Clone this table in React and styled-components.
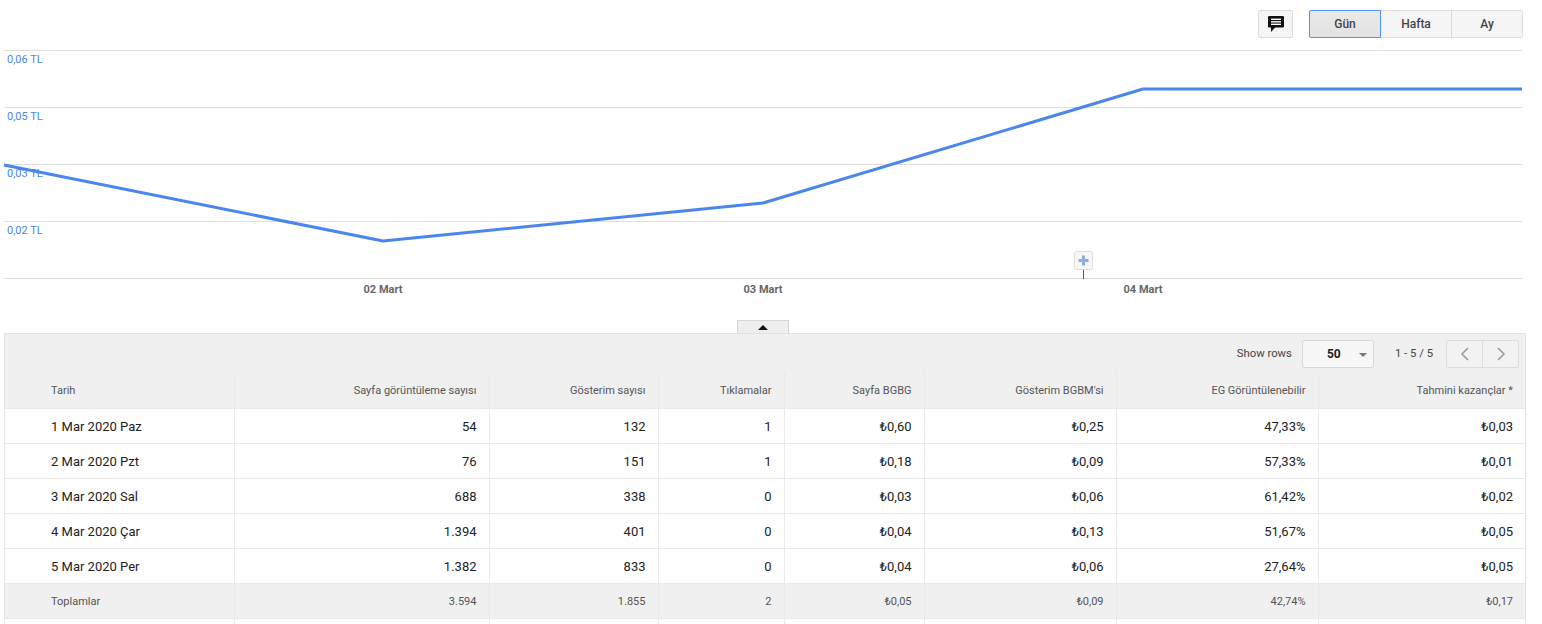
import React from "react";
import styled, { createGlobalStyle, css } from "styled-components";

const Global = createGlobalStyle`
  html, body { margin: 0; padding: 0; background: #fff; }
  body { font-family: Roboto, "Liberation Sans", Arial, sans-serif; color: #222; }
  * { box-sizing: border-box; }
`;

const Page = styled.div`
  width: 1542px;
  height: 624px;
  overflow: hidden;
`;

const TopBar = styled.div`
  height: 50px;
  display: flex;
  justify-content: flex-end;
  align-items: flex-start;
  padding: 10px 19px 0 0;
  gap: 16px;
`;

const IconButton = styled.button`
  width: 35px;
  height: 28px;
  border: 1px solid #dcdcdc;
  border-radius: 2px;
  background: #f5f5f5;
  display: flex;
  align-items: center;
  justify-content: center;
  padding: 0;
`;

const Segmented = styled.div`
  display: flex;
  height: 28px;
`;

const SegButton = styled.button`
  width: 72px;
  height: 28px;
  font-family: Roboto, "Liberation Sans", Arial, sans-serif;
  font-size: 12px;
  font-weight: 500;
  color: #444;
  border: 1px solid #dcdcdc;
  margin-left: -1px;
  background: #f5f5f5;
  padding: 0;
  &:first-child { border-radius: 2px 0 0 2px; margin-left: 0; }
  &:last-child { border-radius: 0 2px 2px 0; }
  ${(p) =>
    p.$active &&
    css`
      background: linear-gradient(#eaeaea, #e2e2e2);
      border-color: #4d90fe;
      position: relative;
      z-index: 1;
    `}
`;

const ChartWrap = styled.div`
  height: 250px;
`;

const Bottom = styled.div`
  margin-top: 20px;
  padding-left: 4px;
  width: 1526px;
`;

const TabRow = styled.div`
  display: flex;
  justify-content: center;
  height: 13px;
  padding-right: 4px;
`;

const CollapseTab = styled.div`
  width: 52px;
  height: 13px;
  background: #eeeeee;
  border: 1px solid #d6d6d6;
  border-bottom: none;
  display: flex;
  justify-content: center;
  padding-top: 4px;
  &::after {
    content: "";
    width: 0;
    height: 0;
    border-left: 5px solid transparent;
    border-right: 5px solid transparent;
    border-bottom: 5px solid #111;
  }
`;

const Panel = styled.div`
  border: 1px solid #e2e2e2;
  border-bottom: none;
  background: #f0f0f0;
  width: 1522px;
`;

const TableBar = styled.div`
  height: 39px;
  display: flex;
  align-items: center;
  justify-content: flex-end;
  padding-right: 6px;
  font-size: 11.3px;
  color: #444;
`;

const BarLabel = styled.span`
  margin-right: 10px;
`;

const Select = styled.div`
  width: 72px;
  height: 28px;
  border: 1px solid #d8d8d8;
  border-radius: 2px;
  background: #f7f7f7;
  display: flex;
  align-items: center;
  padding-left: 24px;
  font-size: 12px;
  font-weight: 700;
  color: #222;
  position: relative;
  margin-right: 21px;
  &::after {
    content: "";
    position: absolute;
    right: 6px;
    top: 12px;
    border-left: 4px solid transparent;
    border-right: 4px solid transparent;
    border-top: 4px solid #777;
  }
`;

const Range = styled.span`
  margin-right: 13px;
`;

const Pager = styled.div`
  display: flex;
`;

const PageBtn = styled.button`
  width: 37px;
  height: 28px;
  border: 1px solid #dcdcdc;
  background: #f2f2f2;
  margin-left: -1px;
  padding: 0;
  display: flex;
  align-items: center;
  justify-content: center;
  &:first-child { margin-left: 0; border-radius: 2px 0 0 2px; }
  &:last-child { border-radius: 0 2px 2px 0; }
`;

const Table = styled.table`
  width: 1520px;
  border-collapse: collapse;
  table-layout: fixed;
`;

const cell = css`
  height: 35px;
  padding: 1px 12px 0;
  border-right: 1px solid #e9e9e9;
  border-bottom: 1px solid #e9e9e9;
  text-align: ${(p) => (p.$left ? "left" : "right")};
  padding-left: ${(p) => (p.$left ? "46px" : "12px")};
  white-space: nowrap;
  &:last-child { border-right: none; }
`;

const Th = styled.th`
  ${cell}
  font-weight: 400;
  font-size: 11px;
  color: #555;
  background: #f0f0f0;
`;

const Td = styled.td`
  ${cell}
  font-size: 13px;
  color: #222;
  background: #fff;
`;

const TotalTd = styled.td`
  ${cell}
  font-size: 11px;
  color: #555;
  background: #f0f0f0;
`;

const EmptyTd = styled.td`
  ${cell}
  background: #fff;
  border-bottom: none;
`;

const cols = [229, 255, 169, 126, 140, 192, 202, 207];
const headers = [
  "Tarih",
  "Sayfa görüntüleme sayısı",
  "Gösterim sayısı",
  "Tıklamalar",
  "Sayfa BGBG",
  "Gösterim BGBM'si",
  "EG Görüntülenebilir",
  "Tahmini kazançlar *",
];
const rows = [
  ["1 Mar 2020 Paz", "54", "132", "1", "₺0,60", "₺0,25", "47,33%", "₺0,03"],
  ["2 Mar 2020 Pzt", "76", "151", "1", "₺0,18", "₺0,09", "57,33%", "₺0,01"],
  ["3 Mar 2020 Sal", "688", "338", "0", "₺0,03", "₺0,06", "61,42%", "₺0,02"],
  ["4 Mar 2020 Çar", "1.394", "401", "0", "₺0,04", "₺0,13", "51,67%", "₺0,05"],
  ["5 Mar 2020 Per", "1.382", "833", "0", "₺0,04", "₺0,06", "27,64%", "₺0,05"],
];
const totals = ["Toplamlar", "3.594", "1.855", "2", "₺0,05", "₺0,09", "42,74%", "₺0,17"];

const grid = [0, 57, 114, 171, 228];
const yLabels = ["0,06 TL", "0,05 TL", "0,03 TL", "0,02 TL"];
const points = [
  [4, 115],
  [383, 191],
  [763, 153],
  [1143, 39],
  [1522, 39],
];
const xLabels = [
  [383, "02 Mart"],
  [763, "03 Mart"],
  [1143, "04 Mart"],
];

function Chart() {
  return (
    <svg width="1542" height="250" viewBox="0 0 1542 250">
      {grid.map((y) => (
        <line key={y} x1="4" x2="1522" y1={y + 0.5} y2={y + 0.5} stroke="#dedede" strokeWidth="1" />
      ))}
      {yLabels.map((t, i) => (
        <text
          key={t}
          x="7"
          y={grid[i] + 13}
          fontSize="11"
          fill="#4a86e8"
          fontFamily="Roboto, 'Liberation Sans', Arial, sans-serif"
        >
          {t}
        </text>
      ))}
      <polyline
        points={points.map((p) => p.join(",")).join(" ")}
        fill="none"
        stroke="#4a86ee"
        strokeWidth="3"
        strokeLinejoin="round"
      />
      {xLabels.map(([x, t]) => (
        <text
          key={t}
          x={x}
          y="243"
          textAnchor="middle"
          fontSize="11"
          fontWeight="700"
          fill="#666"
          fontFamily="Roboto, 'Liberation Sans', Arial, sans-serif"
        >
          {t}
        </text>
      ))}
      <line x1="1083.5" x2="1083.5" y1="219" y2="229" stroke="#555" strokeWidth="1" />
      <rect x="1074.5" y="201.5" width="18" height="18" rx="2" fill="#f6f6f6" stroke="#dcdcdc" />
      <rect x="1082" y="205.5" width="3" height="10" fill="#8eaee0" />
      <rect x="1078.5" y="209" width="10" height="3" fill="#8eaee0" />
    </svg>
  );
}

function CommentIcon() {
  return (
    <svg width="16" height="16" viewBox="0 0 16 16">
      <rect x="0" y="0" width="16" height="11.5" rx="1" fill="#111" />
      <polygon points="3,11 7.5,11 3,16" fill="#111" />
      <rect x="3" y="2.6" width="10" height="1.4" fill="#fff" />
      <rect x="3" y="5.1" width="10" height="1.4" fill="#fff" />
      <rect x="3" y="7.6" width="10" height="1.4" fill="#fff" />
    </svg>
  );
}

function Chevron({ dir }) {
  const pts = dir === "left" ? "9,2 3,8 9,14" : "3,2 9,8 3,14";
  return (
    <svg width="12" height="16" viewBox="0 0 12 16">
      <polyline points={pts} fill="none" stroke="#9a9a9a" strokeWidth="1.6" />
    </svg>
  );
}

export default function App() {
  return (
    <Page>
      <Global />
      <TopBar>
        <IconButton aria-label="comment">
          <CommentIcon />
        </IconButton>
        <Segmented>
          <SegButton $active>Gün</SegButton>
          <SegButton>Hafta</SegButton>
          <SegButton>Ay</SegButton>
        </Segmented>
      </TopBar>
      <ChartWrap>
        <Chart />
      </ChartWrap>
      <Bottom>
        <TabRow>
          <CollapseTab />
        </TabRow>
        <Panel>
          <TableBar>
            <BarLabel>Show rows</BarLabel>
            <Select>50</Select>
            <Range>1 - 5 / 5</Range>
            <Pager>
              <PageBtn aria-label="prev">
                <Chevron dir="left" />
              </PageBtn>
              <PageBtn aria-label="next">
                <Chevron dir="right" />
              </PageBtn>
            </Pager>
          </TableBar>
          <Table>
            <colgroup>
              {cols.map((w, i) => (
                <col key={i} style={{ width: w }} />
              ))}
            </colgroup>
            <thead>
              <tr>
                {headers.map((h, i) => (
                  <Th key={h} $left={i === 0}>
                    {h}
                  </Th>
                ))}
              </tr>
            </thead>
            <tbody>
              {rows.map((r) => (
                <tr key={r[0]}>
                  {r.map((c, i) => (
                    <Td key={i} $left={i === 0}>
                      {c}
                    </Td>
                  ))}
                </tr>
              ))}
              <tr>
                {totals.map((c, i) => (
                  <TotalTd key={i} $left={i === 0}>
                    {c}
                  </TotalTd>
                ))}
              </tr>
              <tr>
                {cols.map((w, i) => (
                  <EmptyTd key={i} $left={i === 0} />
                ))}
              </tr>
            </tbody>
          </Table>
        </Panel>
      </Bottom>
    </Page>
  );
}
